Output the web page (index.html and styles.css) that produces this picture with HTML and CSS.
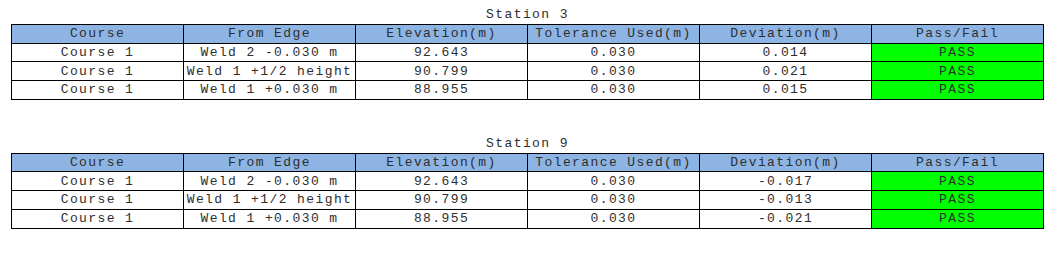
FILE: index.html
```html
<!DOCTYPE html>
<html lang="en">

<head>
    <title>Station Survey</title>
    <meta charset="utf-8">
    <link rel="stylesheet" href="styles.css">
</head>

<body>
    <div class="station">
        <table class="station_table">
            <caption>Station 3</caption>
            <colgroup>
                <col><col><col><col><col><col>
            </colgroup>
            <thead>
                <tr>
                    <th>Course</th>
                    <th>From Edge</th>
                    <th>Elevation(m)</th>
                    <th>Tolerance Used(m)</th>
                    <th>Deviation(m)</th>
                    <th>Pass/Fail</th>
                </tr>
            </thead>
            <tbody>
                <tr>
                    <td>Course 1</td>
                    <td>Weld 2 -0.030 m</td>
                    <td>92.643</td>
                    <td>0.030</td>
                    <td>0.014</td>
                    <td class="pass">PASS</td>
                </tr>
                <tr>
                    <td>Course 1</td>
                    <td>Weld 1 +1/2 height</td>
                    <td>90.799</td>
                    <td>0.030</td>
                    <td>0.021</td>
                    <td class="pass">PASS</td>
                </tr>
                <tr>
                    <td>Course 1</td>
                    <td>Weld 1 +0.030 m</td>
                    <td>88.955</td>
                    <td>0.030</td>
                    <td>0.015</td>
                    <td class="pass">PASS</td>
                </tr>
            </tbody>
        </table>
    </div>

    <div class="station">
        <table class="station_table">
            <caption>Station 9</caption>
            <colgroup>
                <col><col><col><col><col><col>
            </colgroup>
            <thead>
                <tr>
                    <th>Course</th>
                    <th>From Edge</th>
                    <th>Elevation(m)</th>
                    <th>Tolerance Used(m)</th>
                    <th>Deviation(m)</th>
                    <th>Pass/Fail</th>
                </tr>
            </thead>
            <tbody>
                <tr>
                    <td>Course 1</td>
                    <td>Weld 2 -0.030 m</td>
                    <td>92.643</td>
                    <td>0.030</td>
                    <td>-0.017</td>
                    <td class="pass">PASS</td>
                </tr>
                <tr>
                    <td>Course 1</td>
                    <td>Weld 1 +1/2 height</td>
                    <td>90.799</td>
                    <td>0.030</td>
                    <td>-0.013</td>
                    <td class="pass">PASS</td>
                </tr>
                <tr>
                    <td>Course 1</td>
                    <td>Weld 1 +0.030 m</td>
                    <td>88.955</td>
                    <td>0.030</td>
                    <td>-0.021</td>
                    <td class="pass">PASS</td>
                </tr>
            </tbody>
        </table>
    </div>
</body>

</html>
```

FILE: styles.css
```css
body {
    font-family: "Courier New", "Liberation Mono", monospace;
    font-size: 13px;
    color: #2e2e2e;
    background: #fff;
    margin: 0;
    padding: 5px 0 0 11px;
}

.station {
    margin-bottom: 34px;
}

.station:last-child {
    margin-bottom: 0;
}

.station_table {
    border-collapse: collapse;
    table-layout: fixed;
    width: 1033px;
}

.station_table caption {
    height: 19px;
    line-height: 19px;
    letter-spacing: 1.4px;
    text-align: center;
}

.station_table col {
    width: 172px;
}

.station_table th,
.station_table td {
    border: 1px solid #000;
    height: 17.7px;
    padding: 0;
    line-height: 17px;
    text-align: center;
    font-weight: normal;
    letter-spacing: 1.4px;
    white-space: nowrap;
}

.station_table th {
    background: #8db4e2;
}

.station_table td.pass {
    background: #00ff00;
}
```
